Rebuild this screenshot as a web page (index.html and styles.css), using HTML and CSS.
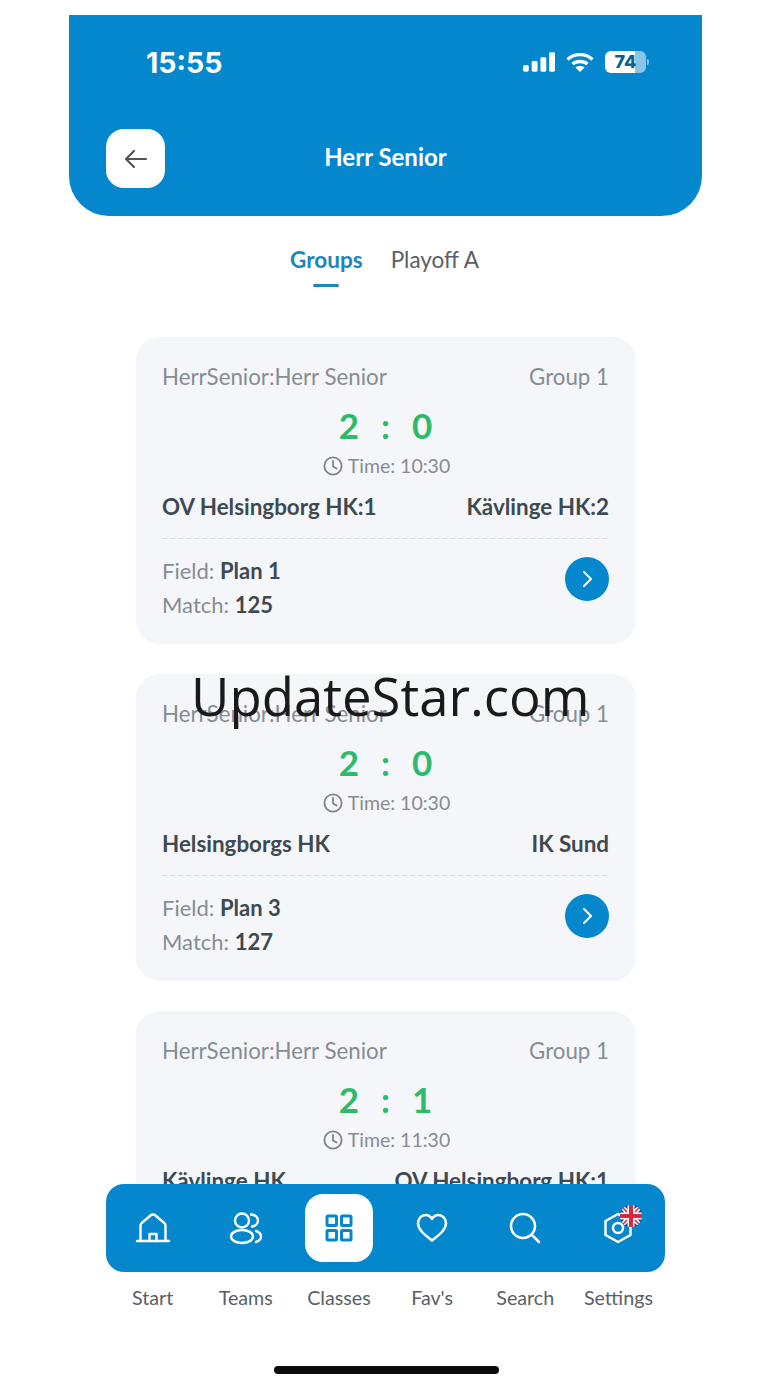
FILE: index.html
```html
<!DOCTYPE html>
<html lang="en">
<head>
    <meta charset="UTF-8">
    <meta name="viewport" content="width=device-width, initial-scale=1.0">
    <title>Herr Senior</title>
    <link rel="stylesheet" href="styles.css">
</head>
<body>

    <div class="app">
        <!-- Header -->
        <div class="header">
            <div class="status-bar">
                <span class="clock">15:55</span>
                <div class="status-icons">
                    <svg width="32" height="20" viewBox="0 0 33 20" fill="#fff">
                        <rect x="0" y="13" width="6" height="7" rx="2"/>
                        <rect x="9" y="9" width="6" height="11" rx="1.5"/>
                        <rect x="18" y="5" width="6" height="15" rx="1.5"/>
                        <rect x="27" y="0" width="6" height="20" rx="1.5"/>
                    </svg>
                    <svg width="28" height="20" viewBox="0 0 28 20" fill="none" stroke="#fff" stroke-width="3.4">
                        <path d="M1.500 7.500C8.500 1 19.500 1 26.500 7.500"/>
                        <path d="M6.500 12C10.500 8.600 17.500 8.600 21.500 12"/>
                        <path d="M14 20l-4.600-4.600c2.600-2 6.600-2 9.200 0z" fill="#fff" stroke="none"/>
                    </svg>
                    <div class="battery"><span>74</span></div>
                </div>
            </div>
            <div class="title-bar">
                <div class="back-btn">
                    <svg width="26" height="26" viewBox="0 0 26 26" fill="none" stroke="#555" stroke-width="2.200" stroke-linecap="round" stroke-linejoin="round">
                        <path d="M23 13H3M11 5l-8 8 8 8"/>
                    </svg>
                </div>
                <div class="title">Herr Senior</div>
            </div>
        </div>

        <!-- Tabs -->
        <div class="tabs">
            <div class="tab active">Groups</div>
            <div class="tab">Playoff A</div>
        </div>

        <!-- Matches -->
        <div class="match-list">
            <div class="card">
                <div class="card-top"><span>HerrSenior:Herr Senior</span><span>Group 1</span></div>
                <div class="score"><span>2</span><span>:</span><span>0</span></div>
                <div class="time">
                    <svg width="20" height="20" viewBox="0 0 20 20" fill="none" stroke="#7d8589" stroke-width="1.800" stroke-linecap="round" stroke-linejoin="round"><circle cx="10" cy="10" r="8.600"/><path d="M10 5v5.400l3.600 2.200"/></svg>
                    Time: 10:30
                </div>
                <div class="teams"><span>OV Helsingborg HK:1</span><span>Kävlinge HK:2</span></div>
                <div class="divider"></div>
                <div class="card-bottom">
                    <div class="info">
                        <div>Field: <b>Plan 1</b></div>
                        <div>Match: <b>125</b></div>
                    </div>
                    <div class="go-btn"><svg width="12" height="18" viewBox="0 0 12 18" fill="none" stroke="#fff" stroke-width="2" stroke-linecap="round" stroke-linejoin="round"><path d="M3 2l7 7-7 7"/></svg></div>
                </div>
            </div>

            <div class="card">
                <div class="card-top"><span>HerrSenior:Herr Senior</span><span>Group 1</span></div>
                <div class="score"><span>2</span><span>:</span><span>0</span></div>
                <div class="time">
                    <svg width="20" height="20" viewBox="0 0 20 20" fill="none" stroke="#7d8589" stroke-width="1.800" stroke-linecap="round" stroke-linejoin="round"><circle cx="10" cy="10" r="8.600"/><path d="M10 5v5.400l3.600 2.200"/></svg>
                    Time: 10:30
                </div>
                <div class="teams"><span>Helsingborgs HK</span><span>IK Sund</span></div>
                <div class="divider"></div>
                <div class="card-bottom">
                    <div class="info">
                        <div>Field: <b>Plan 3</b></div>
                        <div>Match: <b>127</b></div>
                    </div>
                    <div class="go-btn"><svg width="12" height="18" viewBox="0 0 12 18" fill="none" stroke="#fff" stroke-width="2" stroke-linecap="round" stroke-linejoin="round"><path d="M3 2l7 7-7 7"/></svg></div>
                </div>
            </div>

            <div class="card">
                <div class="card-top"><span>HerrSenior:Herr Senior</span><span>Group 1</span></div>
                <div class="score"><span>2</span><span>:</span><span>1</span></div>
                <div class="time">
                    <svg width="20" height="20" viewBox="0 0 20 20" fill="none" stroke="#7d8589" stroke-width="1.800" stroke-linecap="round" stroke-linejoin="round"><circle cx="10" cy="10" r="8.600"/><path d="M10 5v5.400l3.600 2.200"/></svg>
                    Time: 11:30
                </div>
                <div class="teams"><span>Kävlinge HK</span><span>OV Helsingborg HK:1</span></div>
            </div>
        </div>

        <!-- Bottom navigation -->
        <div class="nav">
            <div class="nav-bar">
                <div class="nav-icon">
                    <svg width="36" height="34" viewBox="0 0 36 34" fill="none" stroke="#fff" stroke-width="2.400" stroke-linecap="round" stroke-linejoin="round">
                        <path d="M2 30h32M5.500 30V14.500c0-1 .5-1.800 1.200-2.500L15.500 4.500c1.500-1.300 3.500-1.300 5 0L29.300 12c.7.700 1.200 1.500 1.200 2.500V30"/>
                        <path d="M14.500 30v-7h7v7"/>
                    </svg>
                </div>
                <div class="nav-icon">
                    <svg width="34" height="34" viewBox="0 0 34 34" fill="none" stroke="#fff" stroke-width="2.400" stroke-linecap="round" stroke-linejoin="round">
                        <circle cx="13" cy="9.500" r="7"/>
                        <ellipse cx="13" cy="25.500" rx="11" ry="6.500"/>
                        <path d="M22 3.500c4.500 0 7 3 7 6s-2.500 5.500-6 6M27 20c3 1 5 3 5 5.500s-2 4.500-5 5.500"/>
                    </svg>
                </div>
                <div class="nav-icon active">
                    <svg width="28" height="28" viewBox="0 0 28 28" fill="none" stroke="#0587cd" stroke-width="3" stroke-linejoin="round">
                        <rect x="2" y="2" width="9.500" height="9.500" rx="1"/>
                        <rect x="16.500" y="2" width="9.500" height="9.500" rx="1"/>
                        <rect x="2" y="16.500" width="9.500" height="9.500" rx="1"/>
                        <rect x="16.500" y="16.500" width="9.500" height="9.500" rx="1"/>
                    </svg>
                </div>
                <div class="nav-icon">
                    <svg width="32" height="30" viewBox="0 0 32 30" fill="none" stroke="#fff" stroke-width="2.500" stroke-linejoin="round">
                        <path d="M16 27.500C9 22 2 17 2 10c0-4.500 3.500-8 7.500-8 2.700 0 5 1.300 6.500 4 1.500-2.700 3.800-4 6.500-4 4 0 7.500 3.500 7.500 8 0 7-7 12-14 17.500z"/>
                    </svg>
                </div>
                <div class="nav-icon">
                    <svg width="32" height="32" viewBox="0 0 32 32" fill="none" stroke="#fff" stroke-width="2.500" stroke-linecap="round">
                        <circle cx="14" cy="14" r="12"/>
                        <path d="M23 23l7 7"/>
                    </svg>
                </div>
                <div class="nav-icon">
                    <svg width="30" height="32" viewBox="0 0 30 32" fill="none" stroke="#fff" stroke-width="2.500" stroke-linejoin="round">
                        <path d="M15 2l12.500 7v14L15 30 2.500 23V9z"/>
                        <circle cx="15" cy="16" r="5"/>
                    </svg>
                    <svg class="flag" width="22" height="22" viewBox="0 0 22 22">
                        <defs><clipPath id="flag-clip"><circle cx="11" cy="11" r="11"/></clipPath></defs>
                        <g clip-path="url(#flag-clip)">
                            <rect width="22" height="22" fill="#1f3a7d"/>
                            <path d="M0 0l22 22M22 0L0 22" stroke="#fff" stroke-width="4.500"/>
                            <path d="M0 0l22 22M22 0L0 22" stroke="#d8283f" stroke-width="1.500"/>
                            <path d="M11 0v22M0 11h22" stroke="#fff" stroke-width="7"/>
                            <path d="M11 0v22M0 11h22" stroke="#d8283f" stroke-width="4"/>
                        </g>
                    </svg>
                </div>
            </div>
            <div class="nav-labels">
                <span>Start</span>
                <span>Teams</span>
                <span>Classes</span>
                <span>Fav's</span>
                <span>Search</span>
                <span>Settings</span>
            </div>
        </div>

        <div class="home-indicator"></div>
    </div>

    <div class="watermark">UpdateStar.com</div>

</body>
</html>
```

FILE: styles.css
```css
body {
    font-family: Lato, "Open Sans", sans-serif;
    background-color: #fff;
    margin: 0;
    height: 1387px;
    overflow: hidden;
    position: relative;
}

.app {
    width: 633px;
    margin: 15px 0 0 69px;
}

.header {
    height: 201px;
    background-color: #0587cd;
    border-radius: 0 0 40px 40px;
    color: #fff;
}

.status-bar {
    height: 94px;
    padding: 0 56px 0 77px;
    display: flex;
    justify-content: space-between;
    align-items: center;
    box-sizing: border-box;
}

.clock {
    font-family: Inter, "Liberation Sans", sans-serif;
    font-size: 28.500px;
    font-weight: 700;
    line-height: 36px;
    padding-top: 2px;
}

.status-icons {
    display: flex;
    align-items: center;
    gap: 11px;
}

.battery {
    width: 41px;
    height: 22px;
    border-radius: 6px;
    background: linear-gradient(to right, #fff 72%, #8cc4e8 72%);
    color: #0a5f94;
    font-family: Inter, "Liberation Sans", sans-serif;
    font-size: 18px;
    font-weight: 800;
    line-height: 22px;
    text-align: center;
    position: relative;
}

.battery::after {
    content: "";
    position: absolute;
    left: 42px;
    top: 8px;
    width: 2px;
    height: 6px;
    border-radius: 0 2px 2px 0;
    background-color: #8cc4e8;
}

.title-bar {
    display: flex;
    align-items: flex-start;
    padding-left: 37px;
    margin-top: 20px;
}

.back-btn {
    width: 59px;
    height: 59px;
    border-radius: 18px;
    background-color: #fff;
    display: flex;
    align-items: center;
    justify-content: center;
}

.title {
    flex: 1;
    font-size: 24px;
    font-weight: 700;
    line-height: 30px;
    text-align: center;
    margin: 13px 96px 0 0;
}

.tabs {
    display: flex;
    justify-content: center;
    gap: 28px;
    height: 121px;
    padding: 30px 2px 0 0;
    box-sizing: border-box;
}

.tab {
    font-size: 22.500px;
    line-height: 28px;
    color: #5a6065;
}

.tab.active {
    color: #1a86c0;
    font-weight: 700;
}

.tab.active::after {
    content: "";
    display: block;
    width: 26px;
    height: 3px;
    border-radius: 2px;
    margin: 10px auto 0;
    background-color: #1a86c0;
}

.match-list {
    height: 893px;
    overflow: hidden;
    padding-left: 67px;
}

.card {
    width: 500px;
    height: 307px;
    box-sizing: border-box;
    padding: 26px 27px 0 26px;
    margin-bottom: 30px;
    border-radius: 24px;
    background-color: #f4f6fa;
}

.card-top {
    display: flex;
    justify-content: space-between;
    font-size: 22.300px;
    line-height: 28px;
    color: #868d92;
}

.score {
    display: flex;
    justify-content: center;
    gap: 22px;
    margin-top: 12px;
    font-size: 35px;
    font-weight: 700;
    line-height: 44px;
    color: #2dbb6b;
}

.time {
    display: flex;
    justify-content: center;
    align-items: center;
    gap: 5px;
    margin-top: 6px;
    padding-left: 2px;
    font-size: 19.500px;
    line-height: 26px;
    color: #868d92;
}

.teams {
    display: flex;
    justify-content: space-between;
    margin-top: 13px;
    font-size: 22.400px;
    font-weight: 700;
    line-height: 30px;
    color: #3f4a50;
}

.divider {
    height: 1px;
    margin-top: 16px;
    background: repeating-linear-gradient(to right, #d5d9de 0 5px, transparent 5px 8px);
}

.card-bottom {
    display: flex;
    justify-content: space-between;
    align-items: flex-start;
    padding-top: 15px;
}

.info {
    font-size: 22px;
    line-height: 34px;
    color: #868d92;
}

.info b {
    color: #3f4a50;
}

.go-btn {
    width: 44px;
    height: 44px;
    margin-top: 3px;
    border-radius: 50%;
    background-color: #0587cd;
    display: flex;
    align-items: center;
    justify-content: center;
}

.nav {
    width: 559px;
    margin: -46px 0 0 37px;
    position: relative;
}

.nav-bar {
    display: grid;
    grid-template-columns: repeat(6, 1fr);
    height: 88px;
    border-radius: 18px;
    background-color: #0587cd;
    align-items: center;
    justify-items: center;
}

.nav-icon {
    width: 68px;
    height: 68px;
    display: flex;
    align-items: center;
    justify-content: center;
    position: relative;
}

.nav-icon.active {
    background-color: #fff;
    border-radius: 18px;
}

.flag {
    position: absolute;
    top: 11px;
    right: 10px;
}

.nav-labels {
    display: grid;
    grid-template-columns: repeat(6, 1fr);
    margin-top: 13px;
    font-size: 19.700px;
    line-height: 26px;
    color: #5a6065;
    text-align: center;
}

.home-indicator {
    width: 225px;
    height: 8px;
    border-radius: 4px;
    margin: 55px 0 0 205px;
    background-color: #0b0b0b;
}

.watermark {
    position: absolute;
    left: 191px;
    top: 660px;
    font-family: "Open Sans", sans-serif;
    font-size: 52.700px;
    line-height: 72px;
    color: #1a1a1a;
}
```
